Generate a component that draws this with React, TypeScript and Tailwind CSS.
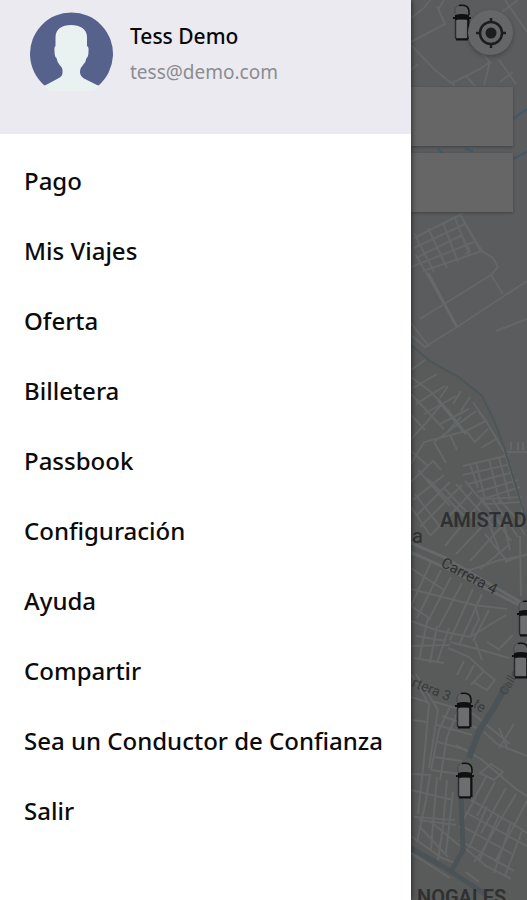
const menuItems = [
  'Pago',
  'Mis Viajes',
  'Oferta',
  'Billetera',
  'Passbook',
  'Configuración',
  'Ayuda',
  'Compartir',
  'Sea un Conductor de Confianza',
  'Salir',
];

function Avatar() {
  return (
    <svg viewBox="0 0 84 84" className="h-[84px] w-[84px] shrink-0" role="img" aria-label="Tess Demo">
      <path d="M14.500 73.500A41.500 41.500 0 1 1 68.500 73.500Z" fill="#56628b" />
      <path
        d="M25.500 34V25C25.500 17 32 13 41 13S57 17 57 25V34Q59 35 58.500 39Q58.500 45 56.500 46Q56 50 53 53Q50 56 50 59Q49.500 64 54 66.500L69 74L64 79H19L14 74L28 66.500Q33 64 32.500 60Q33 56 30 53.500Q27 50 26.500 46Q24.500 45 24.500 39Q24 35 25.500 34Z"
        fill="#e9f1f1"
      />
    </svg>
  );
}

function Car({ x, y }: { x: number; y: number }) {
  return (
    <g transform={`translate(${x} ${y})`}>
      <path d="M2 10V5Q3 1 9 1Q16 1 16 7V11" fill="#5e6061" stroke="#48494a" strokeWidth="1" />
      <path d="M6 1.500Q16 0 16 8V11" fill="none" stroke="#121414" strokeWidth="1.500" />
      <rect x="2.500" y="15" width="12.500" height="20" rx="2" fill="#6c6e6f" stroke="#2a2c2d" strokeWidth="1.500" />
      <path d="M15.500 13V35" stroke="#101212" strokeWidth="2" />
      <path d="M2 11Q9 9 16 11V16Q9 14 2 16Z" fill="#0f1111" />
      <path d="M0 14H2M16 14H18M3 35.500H15" stroke="#101212" strokeWidth="2" />
    </g>
  );
}

function CityMap() {
  return (
    <svg
      viewBox="411 0 116 900"
      preserveAspectRatio="xMidYMin slice"
      className="absolute inset-0 h-full w-full"
      role="img"
      aria-label="Mapa"
    >
      <rect x="411" width="116" height="900" fill="#5a5c5e" />
      <path d="M411 345L430 361L460 378L482 396L494 420L505 450L520 500L527 520V900H411Z" fill="#585b5a" />

      <g fill="none" stroke="#646768" strokeWidth="2">
        <path d="M411 42L445 24L437 6M411 18L424 8L430 0M438 10L444 0M411 45L435 70L455 86M418 64L411 70M452 83L480 69L490 62L475 45M490 62L484 85M466 76L475 86M505 0L527 32M502 12L518 0M499 60L516 84M500 82L513 72" />
        <path d="M414 238L462 214M414 248L465 224M416 258L462 235M411 267L474 242M423 271L482 251M414 233L434 272M428 228L447 268M443 223L458 262M455 218L470 256M461 216L482 251L493 258L498 267L491 275L420 319" />
        <path d="M464 222L480 250M454 239L462 236L470 251L465 254M416 255L457 327M491 275L503 294M411 323L428 345L457 327L527 281M411 335L425 347L430 345M496 331L527 319" />
        <path d="M411 370L425 360M413 388L437 374M416 404L445 386M424 414L456 396M440 424L469 409M448 386L440 398M461 391L453 404M470 397L461 411M411 377L430 391L448 410L466 434M411 394L444 429M411 415L425 430M442 404L425 424M461 417L448 431M476 411L434 442" />
        <path d="M411 464L424 442L466 431L486 421L478 411M411 451L428 466M425 424L411 439M434 442L446 463M450 435L457 450M466 431L475 442L488 429M473 402L486 421L505 453L514 484L522 505V527M498 438L481 448M511 450V442M518 450V442M523 450V442M505 452H527" />
        <path d="M463 466L509 455M463 475L511 464M468 484L514 472M477 492L518 480M483 499L520 487M476 462L485 499M489 459L500 503M499 457L510 500M470 464L478 488" />
        <path d="M411 482L433 461L441 470M413 500L444 475M417 515L450 482M420 527L462 485M430 536L472 492M445 546L485 497M456 554L493 515M470 561L502 526M480 569L510 544" />
        <path d="M418 470L450 506M428 479L464 516M444 488L480 526M456 484L493 526M465 481L504 527M415 494L441 528M411 507L430 535M481 497L511 541M493 500L518 537M500 500L522 525M485 499L522 497M486 504L521 502" />
        <path d="M485 534L507 561M490 526L500 552M503 520L510 550M515 518L525 535M527 555L500 560L470 570L448 566M505 562L527 554M520 536L521 596" />
        <path d="M411 554L426 558M411 568L444 590M431 562L411 606M441 570L417 618M451 577L427 623M462 583L439 627M473 589L450 640M482 594L459 645M411 589L435 595L474 605L507 609" />
        <path d="M411 606L431 619M411 621L436 630L470 637L506 615M416 636L446 641M470 637L479 619L475 605M489 610L473 641M411 646L450 645M414 658L444 663M428 618L419 660M437 626L430 663M449 628L437 663" />
        <path d="M450 642L481 650L509 658M475 641L482 660M487 642L500 650M500 648L513 635M448 648L469 657L484 671L471 685M464 661L457 675M474 665L466 680M485 672L495 680L487 690L473 682" />
        <path d="M411 674L429 704L424 760L418 814M416 674L438 710L429 768M411 697L430 703M413 720L427 722M432 701L472 713L510 744M451 705L439 730L431 770M459 709L447 737L440 780M437 725L472 735M442 716L477 728M438 742L467 750M434 757L462 761M431 770L459 774M411 774L430 775L426 800L417 842M411 790L453 800M414 817L455 820M419 820L456 825" />
        <path d="M437 777L431 849M447 780L443 827L438 860M453 792L446 853M411 836L442 858L458 864M419 826L448 857M430 821L460 846M411 853L450 878" />
        <path d="M456 745L481 759L516 789L527 796M484 732L497 744L527 756M499 728L508 750M514 724L499 748M486 777L472 803M495 782L477 816M506 788L481 833M516 794L484 848M527 801L495 862M471 800L513 824L527 833M465 812L510 837L527 846M462 826L514 855M459 840L514 871M480 773L491 764L503 772L494 780Z" />
        <path d="M475 799L459 828M487 806L469 848M499 815L479 861M511 823L494 873M522 831L505 876M466 849L486 866L511 879M474 862L485 847M466 872L479 882" />
      </g>
      <g fill="none" stroke="#66696a" strokeWidth="3">
        <path d="M411 543L444 557L527 606M411 552L450 570L519 605M438 400L466 434M457 327L446 307L428 273" />
      </g>

      <path d="M411 345L430 361L460 378L482 396L494 420L505 450L520 500L527 520" fill="none" stroke="#4c5659" strokeWidth="2" />
      <path d="M513 119L527 109M513 159L527 152M438 149L443 154M465 149L473 151" fill="none" stroke="#40596a" strokeWidth="2" />
      <path d="M507 684L495 706L479 731L469 758" fill="none" stroke="#4b5356" strokeWidth="6" />
      <path d="M461 797L463 850L451 872M411 848L442 866L485 894" fill="none" stroke="#4b5356" strokeWidth="5" />

      <g fill="#2e3031" fontFamily="Roboto, sans-serif">
        <text x="440" y="527" fontSize="20" fontWeight="600">AMISTAD</text>
        <text x="412" y="543" fontSize="20">a</text>
        <text transform="translate(440 566) rotate(28)" fontSize="15">Carrera 4</text>
        <text transform="translate(411 686) rotate(22)" fontSize="14" fill="#3a3c3d">rtera 3</text>
        <text transform="translate(472 706) rotate(35)" fontSize="14" fill="#3a3c3d">te</text>
        <text transform="translate(506 696) rotate(-60)" fontSize="12" fill="#424445">Calle</text>
        <text x="417" y="904" fontSize="20" fontWeight="600">NOGALES</text>
      </g>

      <Car x={453} y={4} />
      <Car x={517} y={600} />
      <Car x={512} y={642} />
      <Car x={455} y={692} />
      <Car x={456} y={762} />
    </svg>
  );
}

function LocateIcon() {
  return (
    <svg viewBox="0 0 30 30" className="h-[30px] w-[30px]" fill="none" stroke="#1b1d1e" aria-hidden="true">
      <circle cx="15" cy="15" r="11" strokeWidth="2.500" />
      <circle cx="15" cy="15" r="5.500" fill="#1b1d1e" stroke="none" />
      <path d="M15 0V5M15 25V30M0 15H5M25 15H30" strokeWidth="2.500" />
    </svg>
  );
}

export default function App() {
  return (
    <div className="flex h-screen min-h-[860px] w-full overflow-hidden bg-[#5a5c5e]">
      <aside className="z-10 flex w-[78%] shrink-0 flex-col bg-white font-['Noto_Sans',sans-serif] shadow-[0_0_6px_rgba(0,0,0,0.7)]">
        <header className="flex h-[134px] items-start gap-4 bg-[#ebeaf0] pt-3 pl-[30px]">
          <Avatar />
          <div className="flex flex-col pt-2">
            <h1 className="text-[21px] leading-8 font-medium text-[#080808]">Tess Demo</h1>
            <p className="text-[19px] leading-10 text-[#8d8c91]">tess@demo.com</p>
          </div>
        </header>
        <nav className="pt-3">
          <ul>
            {menuItems.map((item) => (
              <li key={item}>
                <a href="#" className="flex h-[70px] items-center pl-6 text-2xl font-medium whitespace-nowrap text-[#0b0b0b]">
                  {item}
                </a>
              </li>
            ))}
          </ul>
        </nav>
      </aside>

      <main className="relative min-w-0 flex-1">
        <CityMap />
        <div className="relative flex flex-col pt-[10px] pr-[14px]">
          <button
            type="button"
            aria-label="Mi ubicación"
            className="flex h-[45px] w-[45px] items-center justify-center self-end rounded-full bg-[#656667] shadow-[0_2px_4px_rgba(0,0,0,0.25)]"
          >
            <LocateIcon />
          </button>
          <input
            type="text"
            aria-label="Origen"
            className="mt-8 h-[59px] w-full bg-[#666666] shadow-[0_1px_3px_rgba(0,0,0,0.3)] outline-none"
          />
          <input
            type="text"
            aria-label="Destino"
            className="mt-[7px] h-[59px] w-full bg-[#666666] shadow-[0_1px_3px_rgba(0,0,0,0.3)] outline-none"
          />
        </div>
      </main>
    </div>
  );
}
